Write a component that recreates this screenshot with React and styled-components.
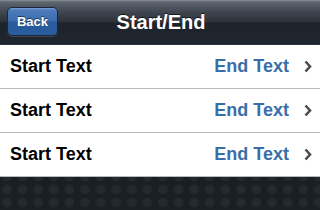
import styled, { createGlobalStyle } from "styled-components";

const GlobalStyle = createGlobalStyle`
  html, body {
    margin: 0;
    padding: 0;
    height: 100%;
  }
  body {
    font-family: "Liberation Sans", Arial, sans-serif;
    background-color: #1a1f25;
    background-image: radial-gradient(
      circle at 8px 6.5px,
      #262b31 0,
      #23282e 4.5px,
      transparent 5.2px
    );
    background-size: 15.6px 13px;
    background-position: -1px 1px;
  }
  #root {
    height: 100%;
  }
`;

const rows = [
  { start: "Start Text", end: "End Text" },
  { start: "Start Text", end: "End Text" },
  { start: "Start Text", end: "End Text" },
];

function App() {
  return (
    <>
      <GlobalStyle />
      <Screen>
        <NavBar>
          <BackButton>Back</BackButton>
          <Title>Start/End</Title>
        </NavBar>
        <List>
          {rows.map((row, i) => (
            <Row key={i}>
              <StartText>{row.start}</StartText>
              <EndText>{row.end}</EndText>
              <Chevron viewBox="0 0 8 13">
                <path d="M1.5 1.5 L6 6.5 L1.5 11.5" />
              </Chevron>
            </Row>
          ))}
        </List>
      </Screen>
    </>
  );
}

const Screen = styled.div`
  display: flex;
  flex-direction: column;
  width: 320px;
`;

const NavBar = styled.header`
  position: relative;
  display: flex;
  align-items: center;
  justify-content: center;
  height: 44px;
  background: linear-gradient(
    to bottom,
    #8b9199 0px,
    #5e656e 2px,
    #40464f 12px,
    #2c323a 22px,
    #1d232b 23px,
    #1f262f 44px
  );
  border-bottom: 1px solid #28313c;
`;

const BackButton = styled.button`
  position: absolute;
  left: 7px;
  top: 7px;
  width: 51px;
  height: 29px;
  padding: 0;
  border: 1px solid #1b2740;
  border-radius: 5px;
  background: linear-gradient(
    to bottom,
    #7aa2d4 0px,
    #4c7cba 2px,
    #3b6cab 13px,
    #285a9a 14px,
    #2b5e9f 29px
  );
  box-shadow: 0 1px 0 rgba(255, 255, 255, 0.15);
  color: #fff;
  font-family: "Liberation Sans", Arial, sans-serif;
  font-weight: bold;
  font-size: 13px;
  text-shadow: 0 -1px 0 rgba(0, 0, 0, 0.5);
`;

const Title = styled.h1`
  margin: 0;
  color: #fff;
  font-size: 20px;
  font-weight: bold;
  text-shadow: 0 -1px 0 rgba(0, 0, 0, 0.6);
  padding-left: 2px;
`;

const List = styled.ul`
  list-style: none;
  margin: 0;
  padding: 0;
  background: #fff;
`;

const Row = styled.li`
  display: flex;
  align-items: center;
  height: 43px;
  padding: 0 8px 0 10px;
  border-bottom: 1px solid #b9b9b9;
  font-size: 18px;
  font-weight: bold;
`;

const StartText = styled.span`
  flex: 1;
  color: #000;
`;

const EndText = styled.span`
  color: #3a6ea8;
  margin-right: 15px;
`;

const Chevron = styled.svg`
  width: 8px;
  height: 13px;
  fill: none;
  stroke: #4d4d4d;
  stroke-width: 2.6;
`;

export default App;
